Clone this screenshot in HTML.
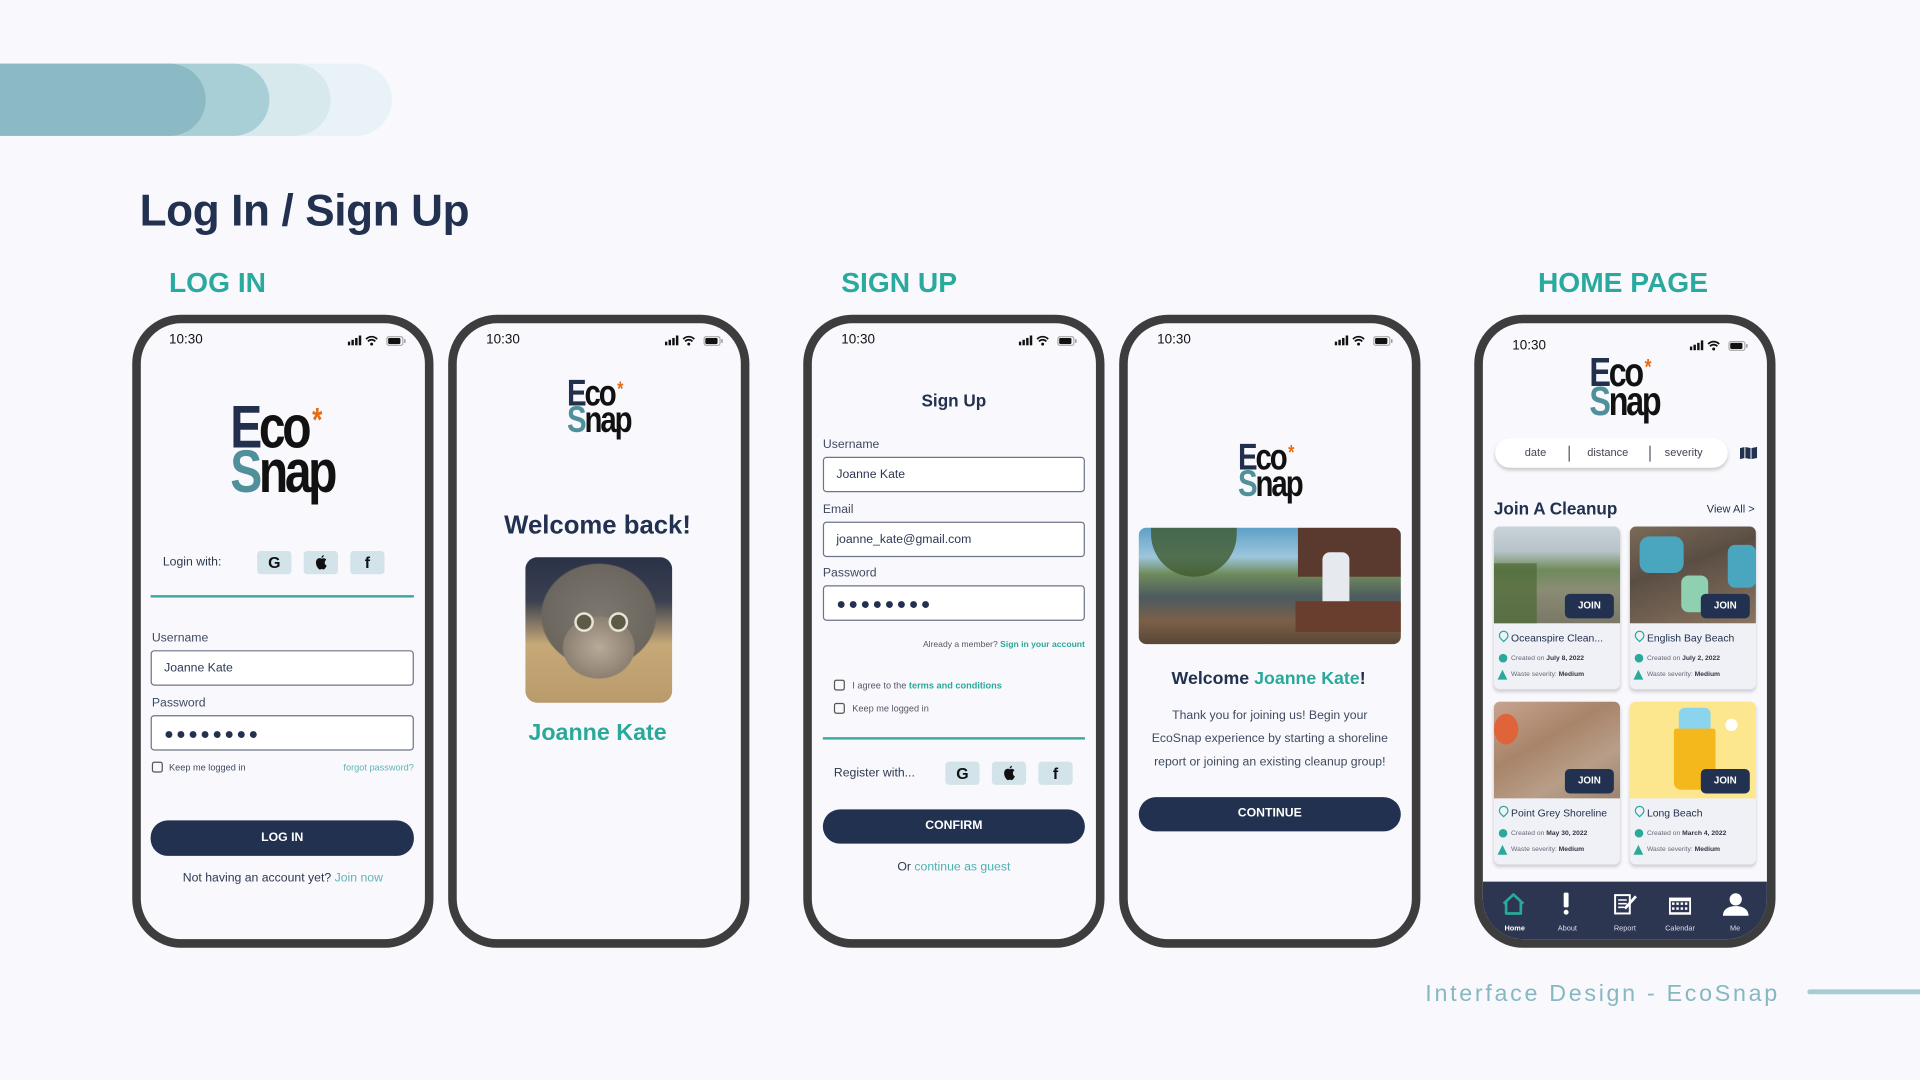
<!DOCTYPE html>
<html><head><meta charset="utf-8">
<style>
html,body{margin:0;padding:0;width:1920px;height:1080px;overflow:hidden;background:#f8f8fd;font-family:"Liberation Sans",sans-serif;}
#w{position:absolute;left:0;top:0;width:1568px;height:882px;transform:scale(1.22449);transform-origin:0 0;}
.a{position:absolute;}
.t{position:absolute;white-space:nowrap;line-height:1;transform:translateY(-50%);}
.c{transform:translate(-50%,-50%);}
.r{transform:translate(-100%,-50%);}
.phone{position:absolute;top:257px;width:232px;height:503px;border:7px solid #3d3d3d;border-radius:40px;background:#f9f9fd;}
.logo{position:absolute;font-weight:bold;line-height:.74em;letter-spacing:-.07em;transform:scaleX(.8);transform-origin:0 0;white-space:nowrap;}
.logo .e{color:#23304d}.logo .k{color:#111}.logo .s{color:#4f909b}.logo .st{color:#e86b12;font-size:.55em;vertical-align:.5em;margin-left:.15em}
.lab{font-size:10px;color:#3f4a60;}
.inp{position:absolute;border:1px solid #6d7487;border-radius:3px;background:#fff;box-sizing:border-box;}
.inp span{position:absolute;left:10px;top:50%;transform:translateY(-50%);font-size:10px;color:#2d3850;white-space:nowrap}
.dots{letter-spacing:2px;font-size:13px!important;color:#22314f!important}
.btn{position:absolute;background:#22314f;border-radius:14px;color:#fff;font-weight:bold;font-size:10px;text-align:center;}
.sb{position:absolute;width:28px;height:19px;background:#d3e3ea;border-radius:3px;text-align:center;line-height:19px;font-weight:bold;font-size:13px;color:#111}
.cb{position:absolute;width:9px;height:9px;border:1px solid #555;border-radius:2px;box-sizing:border-box}
.card{position:absolute;width:103px;height:133px;background:#f0f1f6;border-radius:5px;box-shadow:0 2px 3px rgba(0,0,0,.18);overflow:hidden}
.card .img{position:absolute;left:0;top:0;width:103px;height:79px}
.card .j{position:absolute;right:5px;top:55px;width:40px;height:20px;background:#22314f;border-radius:4px;color:#fff;font-weight:bold;font-size:8px;text-align:center;line-height:20px}
.card .n{position:absolute;left:14px;top:86px;font-size:8.5px;color:#22314f;white-space:nowrap}
.card .m{position:absolute;left:14px;font-size:5.5px;color:#667;white-space:nowrap}
.card .m b{color:#334}
.card .pin{position:absolute;left:4px;top:85px;width:6px;height:6px;border:1.5px solid #2aa89a;border-radius:50% 50% 50% 0;transform:rotate(-45deg)}
.card .clk{position:absolute;left:4px;top:104px;width:7px;height:7px;background:#2aa89a;border-radius:50%}
.card .tri{position:absolute;left:3px;top:117px;width:0;height:0;border-left:4.5px solid transparent;border-right:4.5px solid transparent;border-bottom:8px solid #2aa89a}
.nl{position:absolute;top:756px;font-size:6px;color:#dde;transform:translateX(-50%);white-space:nowrap}
</style></head><body><div id="w">

<div class="a" style="left:-60px;top:52px;width:380px;height:59px;border-radius:0 30px 30px 0;background:#e9f2f6"></div>
<div class="a" style="left:-60px;top:52px;width:330px;height:59px;border-radius:0 30px 30px 0;background:#d8e9ee"></div>
<div class="a" style="left:-60px;top:52px;width:280px;height:59px;border-radius:0 30px 30px 0;background:#a9cfd6"></div>
<div class="a" style="left:-60px;top:52px;width:228px;height:59px;border-radius:0 30px 30px 0;background:#8cbac4"></div>

<div class="t" style="left:114px;top:172px;font-size:36px;font-weight:bold;color:#22314f;letter-spacing:-.3px">Log In / Sign Up</div>
<div class="t" style="left:138px;top:231px;font-size:23px;font-weight:bold;color:#2aaa9e">LOG IN</div>
<div class="t" style="left:687px;top:231px;font-size:23px;font-weight:bold;color:#2aaa9e">SIGN UP</div>
<div class="t" style="left:1256px;top:231px;font-size:23px;font-weight:bold;color:#2aaa9e">HOME PAGE</div>

<div class="t" style="left:1164px;top:812px;font-size:19px;color:#86b8c2;letter-spacing:2.2px">Interface Design - EcoSnap</div>
<div class="a" style="left:1476px;top:808px;width:100px;height:4px;border-radius:2px;background:#a6ccd4"></div>

<!-- PHONE 1 -->
<div class="phone" style="left:108px"></div>
<div class="t" style="left:138px;top:278px;font-size:11px;color:#111">10:30</div>
<svg class="a" style="left:284px;top:273px" width="50" height="10" viewBox="0 0 50 10"><rect x="0" y="6" width="2" height="3" fill="#111"/><rect x="3" y="4.5" width="2" height="4.5" fill="#111"/><rect x="6" y="3" width="2" height="6" fill="#111"/><rect x="9" y="1" width="2" height="8" fill="#111"/><path d="M15 4a6 6 0 0 1 9 0M16.5 5.8a4 4 0 0 1 6 0" stroke="#111" stroke-width="1.4" fill="none"/><circle cx="19.5" cy="8" r="1.2" fill="#111"/><rect x="32" y="2" width="13" height="7" rx="1.5" fill="none" stroke="#999" stroke-width=".8"/><rect x="33" y="3" width="10" height="5" rx="1" fill="#111"/><rect x="46" y="4" width="1.2" height="3" fill="#999"/></svg>
<div class="logo" style="left:188px;top:325px;font-size:49px"><span class="e">E</span><span class="k">co</span><span class="st">*</span><br><span class="s">S</span><span class="k">nap</span></div>
<div class="t" style="left:133px;top:460px;font-size:10px;color:#2d3850">Login with:</div>
<div class="sb" style="left:210px;top:450px">G</div>
<div class="sb" style="left:248px;top:450px"><svg width="11" height="13" viewBox="0 0 11 13" style="margin-top:3px"><path d="M5.5 3.2C4.5 2.6 2.8 2.7 1.8 3.9 .5 5.5 1 8.6 2.4 10.6c.7 1 1.3 1.6 2 1.5.6 0 .8-.4 1.4-.4s.8.4 1.4.4c.8 0 1.3-.9 1.9-1.7.4-.6.6-1.2.7-1.4-1-.4-1.7-1.4-1.6-2.6 0-1 .6-1.8 1.3-2.3-.7-1-1.8-1.2-2.300-1.2-.7 0-1.3.4-1.7.3z M5.6 2.6C5.5 1.6 6.3.5 7.4.4c.1 1.1-.8 2.2-1.8 2.2z" fill="#111"/></svg></div>
<div class="sb" style="left:286px;top:450px">f</div>
<div class="a" style="left:123px;top:486px;width:215px;height:2px;background:#3aa9a0"></div>
<div class="t lab" style="left:124px;top:522px">Username</div>
<div class="inp" style="left:123px;top:531px;width:215px;height:29px"><span>Joanne Kate</span></div>
<div class="t lab" style="left:124px;top:575px">Password</div>
<div class="inp" style="left:123px;top:584px;width:215px;height:29px"><span class="dots">●●●●●●●●</span></div>
<div class="cb" style="left:124px;top:622px"></div>
<div class="t" style="left:138px;top:627px;font-size:7.5px;color:#3f4a60">Keep me logged in</div>
<div class="t r" style="left:338px;top:627px;font-size:7.5px;color:#5fb3b3">forgot password?</div>
<div class="btn" style="left:123px;top:670px;width:215px;height:29px;line-height:29px">LOG IN</div>
<div class="t c" style="left:231px;top:718px;font-size:10px;color:#2d3850">Not having an account yet? <span style="color:#5fb3b3">Join now</span></div>

<!-- PHONE 2 -->
<div class="phone" style="left:366px"></div>
<div class="t" style="left:397px;top:278px;font-size:11px;color:#111">10:30</div>
<svg class="a" style="left:543px;top:273px" width="50" height="10" viewBox="0 0 50 10"><rect x="0" y="6" width="2" height="3" fill="#111"/><rect x="3" y="4.5" width="2" height="4.5" fill="#111"/><rect x="6" y="3" width="2" height="6" fill="#111"/><rect x="9" y="1" width="2" height="8" fill="#111"/><path d="M15 4a6 6 0 0 1 9 0M16.5 5.8a4 4 0 0 1 6 0" stroke="#111" stroke-width="1.4" fill="none"/><circle cx="19.5" cy="8" r="1.2" fill="#111"/><rect x="32" y="2" width="13" height="7" rx="1.5" fill="none" stroke="#999" stroke-width=".8"/><rect x="33" y="3" width="10" height="5" rx="1" fill="#111"/><rect x="46" y="4" width="1.2" height="3" fill="#999"/></svg>
<div class="logo" style="left:463px;top:307px;font-size:30px"><span class="e">E</span><span class="k">co</span><span class="st">*</span><br><span class="s">S</span><span class="k">nap</span></div>
<div class="t c" style="left:488px;top:429px;font-size:21px;font-weight:bold;color:#22314f">Welcome back!</div>
<div class="a" style="left:429px;top:455px;width:120px;height:119px;border-radius:10px;overflow:hidden;background:radial-gradient(ellipse 40% 35% at 50% 62%,#b8aa98 0,#8c8072 60%,transparent 62%),radial-gradient(ellipse 55% 50% at 50% 40%,#7c7870 0,#6b665e 70%,transparent 72%),linear-gradient(180deg,#2a3248 0,#3b4050 30%,#c7a978 60%,#b99a6c 100%)">
<div class="a" style="left:40px;top:45px;width:12px;height:12px;border-radius:50%;background:#5d5a45;border:2px solid #e8e3d8"></div>
<div class="a" style="left:68px;top:45px;width:12px;height:12px;border-radius:50%;background:#5d5a45;border:2px solid #e8e3d8"></div></div>
<div class="t c" style="left:488px;top:599px;font-size:19px;font-weight:bold;color:#2aa89a">Joanne Kate</div>

<!-- PHONE 3 -->
<div class="phone" style="left:656px"></div>
<div class="t" style="left:687px;top:278px;font-size:11px;color:#111">10:30</div>
<svg class="a" style="left:832px;top:273px" width="50" height="10" viewBox="0 0 50 10"><rect x="0" y="6" width="2" height="3" fill="#111"/><rect x="3" y="4.5" width="2" height="4.5" fill="#111"/><rect x="6" y="3" width="2" height="6" fill="#111"/><rect x="9" y="1" width="2" height="8" fill="#111"/><path d="M15 4a6 6 0 0 1 9 0M16.5 5.8a4 4 0 0 1 6 0" stroke="#111" stroke-width="1.4" fill="none"/><circle cx="19.5" cy="8" r="1.2" fill="#111"/><rect x="32" y="2" width="13" height="7" rx="1.5" fill="none" stroke="#999" stroke-width=".8"/><rect x="33" y="3" width="10" height="5" rx="1" fill="#111"/><rect x="46" y="4" width="1.2" height="3" fill="#999"/></svg>
<div class="t c" style="left:779px;top:327px;font-size:14px;font-weight:bold;color:#22314f">Sign Up</div>
<div class="t lab" style="left:672px;top:364px">Username</div>
<div class="inp" style="left:672px;top:373px;width:214px;height:29px"><span>Joanne Kate</span></div>
<div class="t lab" style="left:672px;top:417px">Email</div>
<div class="inp" style="left:672px;top:426px;width:214px;height:29px"><span>joanne_kate@gmail.com</span></div>
<div class="t lab" style="left:672px;top:469px">Password</div>
<div class="inp" style="left:672px;top:478px;width:214px;height:29px"><span class="dots">●●●●●●●●</span></div>
<div class="t r" style="left:886px;top:527px;font-size:7px;color:#556">Already a member? <b style="color:#2aa89a">Sign in your account</b></div>
<div class="cb" style="left:681px;top:555px"></div>
<div class="t" style="left:696px;top:560px;font-size:7.5px;color:#556">I agree to the <b style="color:#2aa89a">terms and conditions</b></div>
<div class="cb" style="left:681px;top:574px"></div>
<div class="t" style="left:696px;top:579px;font-size:7.5px;color:#556">Keep me logged in</div>
<div class="a" style="left:672px;top:602px;width:214px;height:1.5px;background:#3aa9a0"></div>
<div class="t" style="left:681px;top:632px;font-size:10px;color:#2d3850">Register with...</div>
<div class="sb" style="left:772px;top:622px">G</div>
<div class="sb" style="left:810px;top:622px"><svg width="11" height="13" viewBox="0 0 11 13" style="margin-top:3px"><path d="M5.5 3.2C4.5 2.6 2.8 2.7 1.8 3.9 .5 5.5 1 8.6 2.4 10.6c.7 1 1.3 1.6 2 1.5.6 0 .8-.4 1.4-.4s.8.4 1.4.4c.8 0 1.3-.9 1.9-1.7.4-.6.6-1.2.7-1.4-1-.4-1.7-1.4-1.6-2.6 0-1 .6-1.8 1.3-2.3-.7-1-1.8-1.2-2.3-1.2-.7 0-1.3.4-1.7.3z M5.6 2.6C5.5 1.6 6.3.5 7.4.4c.1 1.1-.8 2.2-1.8 2.2z" fill="#111"/></svg></div>
<div class="sb" style="left:848px;top:622px">f</div>
<div class="btn" style="left:672px;top:661px;width:214px;height:28px;line-height:28px">CONFIRM</div>
<div class="t c" style="left:779px;top:709px;font-size:10px;color:#2d3850">Or <span style="color:#4fb0ae">continue as guest</span></div>

<!-- PHONE 4 -->
<div class="phone" style="left:914px"></div>
<div class="t" style="left:945px;top:278px;font-size:11px;color:#111">10:30</div>
<svg class="a" style="left:1090px;top:273px" width="50" height="10" viewBox="0 0 50 10"><rect x="0" y="6" width="2" height="3" fill="#111"/><rect x="3" y="4.5" width="2" height="4.5" fill="#111"/><rect x="6" y="3" width="2" height="6" fill="#111"/><rect x="9" y="1" width="2" height="8" fill="#111"/><path d="M15 4a6 6 0 0 1 9 0M16.5 5.8a4 4 0 0 1 6 0" stroke="#111" stroke-width="1.4" fill="none"/><circle cx="19.5" cy="8" r="1.2" fill="#111"/><rect x="32" y="2" width="13" height="7" rx="1.5" fill="none" stroke="#999" stroke-width=".8"/><rect x="33" y="3" width="10" height="5" rx="1" fill="#111"/><rect x="46" y="4" width="1.2" height="3" fill="#999"/></svg>
<div class="logo" style="left:1011px;top:359px;font-size:30px"><span class="e">E</span><span class="k">co</span><span class="st">*</span><br><span class="s">S</span><span class="k">nap</span></div>
<div class="a" style="left:930px;top:431px;width:214px;height:95px;border-radius:6px;overflow:hidden;background:linear-gradient(180deg,#5fa0c8 0,#9cc6dc 25%,#6e8a5a 40%,#4d5a60 60%,#7a6048 80%,#5a4636 100%)">
<div class="a" style="left:130px;top:0;width:84px;height:40px;background:#5a3a2e"></div>
<div class="a" style="left:10px;top:0;width:70px;height:40px;border-radius:0 0 40px 40px;background:#3e5a2e;opacity:.8"></div>
<div class="a" style="left:150px;top:20px;width:22px;height:50px;background:#e6e9ee;border-radius:6px"></div>
<div class="a" style="left:128px;top:60px;width:86px;height:25px;background:#6a3e2e"></div></div>
<div class="t c" style="left:1036px;top:555px;font-size:14.5px;font-weight:bold;color:#22314f">Welcome <span style="color:#2aa89a">Joanne Kate</span>!</div>
<div class="a" style="left:915px;top:575px;width:244px;text-align:center;font-size:10px;line-height:19px;color:#3f4a60;white-space:nowrap">Thank you for joining us! Begin your<br>EcoSnap experience by starting a shoreline<br>report or joining an existing cleanup group!</div>
<div class="btn" style="left:930px;top:651px;width:214px;height:28px;line-height:28px">CONTINUE</div>

<!-- PHONE 5 -->
<div class="phone" style="left:1204px;overflow:hidden"><div class="a" style="left:0;top:456px;width:232px;height:47px;background:#2c3650"></div></div>
<div class="t" style="left:1235px;top:283px;font-size:11px;color:#111">10:30</div>
<svg class="a" style="left:1380px;top:277px" width="50" height="10" viewBox="0 0 50 10"><rect x="0" y="6" width="2" height="3" fill="#111"/><rect x="3" y="4.5" width="2" height="4.5" fill="#111"/><rect x="6" y="3" width="2" height="6" fill="#111"/><rect x="9" y="1" width="2" height="8" fill="#111"/><path d="M15 4a6 6 0 0 1 9 0M16.5 5.8a4 4 0 0 1 6 0" stroke="#111" stroke-width="1.4" fill="none"/><circle cx="19.5" cy="8" r="1.2" fill="#111"/><rect x="32" y="2" width="13" height="7" rx="1.5" fill="none" stroke="#999" stroke-width=".8"/><rect x="33" y="3" width="10" height="5" rx="1" fill="#111"/><rect x="46" y="4" width="1.2" height="3" fill="#999"/></svg>
<div class="logo" style="left:1298px;top:288px;font-size:33px"><span class="e">E</span><span class="k">co</span><span class="st">*</span><br><span class="s">S</span><span class="k">nap</span></div>
<div class="a" style="left:1221px;top:358px;width:190px;height:24px;border-radius:12px;background:#fff;box-shadow:0 2px 3px rgba(0,0,0,.2)"></div>
<div class="t c" style="left:1254px;top:370px;font-size:9px;color:#445">date</div>
<div class="a" style="left:1281px;top:364px;width:1px;height:13px;background:#556"></div>
<div class="t c" style="left:1313px;top:370px;font-size:9px;color:#445">distance</div>
<div class="a" style="left:1347px;top:364px;width:1px;height:13px;background:#556"></div>
<div class="t c" style="left:1375px;top:370px;font-size:9px;color:#445">severity</div>
<svg class="a" style="left:1421px;top:365px" width="14" height="10" viewBox="0 0 14 10"><path d="M0 1l4-1 5 1 5-1v9l-5 1-5-1-4 1z" fill="#22314f"/><path d="M4 0v9M9 1v9" stroke="#fff" stroke-width=".8"/></svg>
<div class="t" style="left:1220px;top:415px;font-size:14px;font-weight:bold;color:#22314f">Join A Cleanup</div>
<div class="t r" style="left:1433px;top:416px;font-size:9px;color:#22314f">View All &gt;</div>

<div class="card" style="left:1220px;top:430px"><div class="img" style="background:linear-gradient(180deg,#c9d2d8 0,#b8c4ca 25%,#6f8a5a 45%,#8a8c74 65%,#7a7866 100%)"><div class="a" style="left:0;top:30px;width:35px;height:49px;background:#4d6a36;opacity:.7"></div></div><div class="j">JOIN</div><div class="pin"></div><div class="n">Oceanspire Clean...</div><div class="clk"></div><div class="m" style="top:105px">Created on <b>July 8, 2022</b></div><div class="tri"></div><div class="m" style="top:118px">Waste severity: <b>Medium</b></div></div>
<div class="card" style="left:1331px;top:430px"><div class="img" style="background:linear-gradient(160deg,#7a6a58 0,#5a4e44 40%,#8a7460 100%)"><div class="a" style="left:8px;top:8px;width:36px;height:30px;background:#4aa6be;border-radius:8px"></div><div class="a" style="left:80px;top:15px;width:23px;height:35px;background:#4aa6be;border-radius:6px"></div><div class="a" style="left:42px;top:40px;width:22px;height:30px;background:#8ed0b0;border-radius:6px"></div></div><div class="j">JOIN</div><div class="pin"></div><div class="n">English Bay Beach</div><div class="clk"></div><div class="m" style="top:105px">Created on <b>July 2, 2022</b></div><div class="tri"></div><div class="m" style="top:118px">Waste severity: <b>Medium</b></div></div>
<div class="card" style="left:1220px;top:573px"><div class="img" style="background:linear-gradient(150deg,#c8a490 0,#a8846a 40%,#b89e88 70%,#9a8470 100%)"><div class="a" style="left:0;top:10px;width:20px;height:25px;background:#e0643a;border-radius:50%"></div></div><div class="j">JOIN</div><div class="pin"></div><div class="n">Point Grey Shoreline</div><div class="clk"></div><div class="m" style="top:105px">Created on <b>May 30, 2022</b></div><div class="tri"></div><div class="m" style="top:118px">Waste severity: <b>Medium</b></div></div>
<div class="card" style="left:1331px;top:573px"><div class="img" style="background:#fde78e"><div class="a" style="left:40px;top:5px;width:26px;height:20px;background:#8ad4ee;border-radius:5px"></div><div class="a" style="left:36px;top:22px;width:34px;height:50px;background:#f5b81c;border-radius:2px 2px 6px 6px"></div><div class="a" style="left:78px;top:14px;width:10px;height:10px;background:#fff;border-radius:50%"></div></div><div class="j">JOIN</div><div class="pin"></div><div class="n">Long Beach</div><div class="clk"></div><div class="m" style="top:105px">Created on <b>March 4, 2022</b></div><div class="tri"></div><div class="m" style="top:118px">Waste severity: <b>Medium</b></div></div>

<svg class="a" style="left:1226px;top:729px" width="20" height="19" viewBox="0 0 20 19"><path d="M2 9L10 1.5 18 9M4 7.5V17h12V7.5" stroke="#2aa89a" stroke-width="2.2" fill="none" stroke-linejoin="round"/></svg>
<div class="a" style="left:1277px;top:729px;width:4px;height:12px;background:#fff;border-radius:1px"></div>
<div class="a" style="left:1277px;top:743px;width:4px;height:4px;background:#fff;border-radius:50%"></div>
<svg class="a" style="left:1318px;top:729px" width="20" height="19" viewBox="0 0 20 19"><rect x="1" y="2" width="12" height="15" fill="none" stroke="#fff" stroke-width="1.6"/><path d="M3.5 6h7M3.5 9h7M3.5 12h5" stroke="#fff" stroke-width="1.3"/><path d="M9 13l9-10" stroke="#fff" stroke-width="2.2"/></svg>
<svg class="a" style="left:1362px;top:731px" width="20" height="17" viewBox="0 0 20 17"><rect x="1" y="2" width="18" height="14" fill="#fff"/><rect x="2.5" y="5" width="15" height="9" fill="#2c3650"/><g fill="#fff"><rect x="3.5" y="6" width="2" height="2"/><rect x="7" y="6" width="2" height="2"/><rect x="10.5" y="6" width="2" height="2"/><rect x="14" y="6" width="2" height="2"/><rect x="3.5" y="10" width="2" height="2"/><rect x="7" y="10" width="2" height="2"/><rect x="10.5" y="10" width="2" height="2"/><rect x="14" y="10" width="2" height="2"/></g></svg>
<svg class="a" style="left:1407px;top:729px" width="21" height="19" viewBox="0 0 21 19"><circle cx="10.5" cy="5.5" r="5" fill="#fff"/><path d="M0 19c0-5 4-8 10.5-8S21 14 21 19z" fill="#fff"/></svg>
<div class="nl" style="left:1237px;font-weight:bold;color:#fff">Home</div>
<div class="nl" style="left:1280px">About</div>
<div class="nl" style="left:1327px">Report</div>
<div class="nl" style="left:1372px">Calendar</div>
<div class="nl" style="left:1417px">Me</div>

</div></body></html>
